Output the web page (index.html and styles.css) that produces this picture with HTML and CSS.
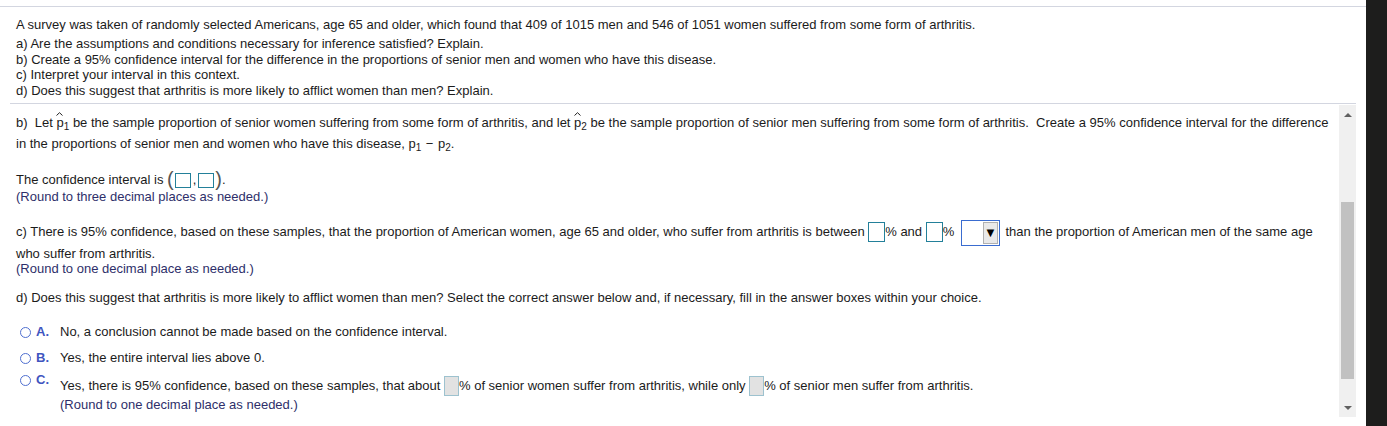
FILE: index.html
```html
<!DOCTYPE html>
<html>
<head>
<meta charset="utf-8">
<link rel="stylesheet" href="styles.css">
</head>
<body>
<div class="screen">
  <div class="main">
    <div class="question">
      <p class="intro">A survey was taken of randomly selected Americans, age 65 and older, which found that 409 of 1015 men and 546 of 1051 women suffered from some form of arthritis.</p>
      <p class="parts">a) Are the assumptions and conditions necessary for inference satisfied? Explain.<br>b) Create a 95% confidence interval for the difference in the proportions of senior men and women who have this disease.<br>c) Interpret your interval in this context.<br>d) Does this suggest that arthritis is more likely to afflict women than men? Explain.</p>
    </div>
    <div class="pane">
      <div class="content">
        <p class="pb">b)&nbsp; Let <span class="ph">p<svg class="hat" width="7" height="4" viewBox="0 0 7 4"><path d="M0.5 3.5 L3.5 0.7 L6.5 3.5" fill="none" stroke="#222" stroke-width="1"/></svg></span><sub>1</sub> be the sample proportion of senior women suffering from some form of arthritis, and let <span class="ph">p<svg class="hat" width="7" height="4" viewBox="0 0 7 4"><path d="M0.5 3.5 L3.5 0.7 L6.5 3.5" fill="none" stroke="#222" stroke-width="1"/></svg></span><sub>2</sub> be the sample proportion of senior men suffering from some form of arthritis.&nbsp; Create a 95% confidence interval for the difference<br>in the proportions of senior men and women who have this disease, <span class="pv">p</span><sub>1</sub> <span class="minus">−</span> <span class="pv">p</span><sub>2</sub>.</p>
        <p class="ci">The confidence interval is <span class="paren">(</span><span class="box ci-box"></span><span class="comma">,</span><span class="box ci-box"></span><span class="paren">)</span>.</p>
        <p class="note">(Round to three decimal places as needed.)</p>
        <p class="pc">c) There is 95% confidence, based on these samples, that the proportion of American women, age 65 and older, who suffer from arthritis is between <span class="box c-box"></span>% and <span class="box c-box"></span>% <span class="select"><span class="sel-btn">▼</span></span> than the proportion of American men of the same age<br>who suffer from arthritis.</p>
        <p class="note note-c">(Round to one decimal place as needed.)</p>
        <p class="pd">d) Does this suggest that arthritis is more likely to afflict women than men? Select the correct answer below and, if necessary, fill in the answer boxes within your choice.</p>
        <div class="choices">
          <div class="choice">
            <span class="radio"></span><span class="letter">A.</span><span class="ctext">No, a conclusion cannot be made based on the confidence interval.</span>
          </div>
          <div class="choice">
            <span class="radio"></span><span class="letter">B.</span><span class="ctext">Yes, the entire interval lies above 0.</span>
          </div>
          <div class="choice choice-c">
            <span class="radio"></span><span class="letter">C.</span>
            <div class="ctext">
              <div class="cline">Yes, there is 95% confidence, based on these samples, that about <span class="box g-box"></span>% of senior women suffer from arthritis, while only <span class="box g-box"></span>% of senior men suffer from arthritis.</div>
              <div class="note">(Round to one decimal place as needed.)</div>
            </div>
          </div>
        </div>
      </div>
      <div class="scrollbar">
        <div class="arrow up"></div>
        <div class="track"><div class="thumb"></div></div>
        <div class="arrow down"></div>
      </div>
    </div>
  </div>
  <div class="dark"></div>
</div>
</body>
</html>
```

FILE: styles.css
```css
html, body {
  margin: 0;
  padding: 0;
  background: #ffffff;
}
body {
  font-family: "Liberation Sans", Arial, sans-serif;
  font-size: 13px;
  color: #1b1b1b;
}
p { margin: 0; }
.screen {
  display: flex;
  width: 1387px;
  height: 426px;
  overflow: hidden;
}
.main {
  width: 1366px;
  height: 426px;
  padding-top: 6px;
  box-sizing: border-box;
  display: flex;
  flex-direction: column;
}
.dark {
  width: 21px;
  height: 426px;
  background: #1d1d1c;
}
.question {
  border-top: 1px solid #d3d6e0;
  padding: 10px 0 0 16px;
  height: 97px;
  box-sizing: border-box;
}
.intro { line-height: 15.5px; }
.parts { line-height: 15.5px; margin-top: 3.5px; }

.pane {
  margin-left: 10px;
  margin-right: 10px;
  border-top: 1px solid #d3d6e0;
  flex: 1;
  display: flex;
  min-height: 0;
}
.content {
  flex: 1;
  padding: 8px 0 0 6px;
}
.pb { line-height: 21px; }
.ph {
  position: relative;
  display: inline-block;
}
.hat {
  position: absolute;
  left: 0px;
  top: 0px;
  display: block;
}
sub {
  font-size: 10px;
  vertical-align: -3px;
  line-height: 0;
}
.minus { margin: 0 1px; }
.ci { line-height: 17px; margin-top: 17px; }
.note { line-height: 17px; color: #2e2f6a; }
.paren {
  font-size: 20px;
  line-height: 0;
  color: #555;
  font-weight: 300;
  vertical-align: -2px;
}
.comma { margin: 0 1px; }
.box {
  display: inline-block;
  box-sizing: border-box;
  vertical-align: middle;
}
.ci-box {
  width: 16px;
  height: 15px;
  border: 1px solid #23809a;
  margin: 0 1px;
}
.pc { line-height: 21px; margin-top: 16px; }
.c-box {
  width: 17px;
  height: 20px;
  border: 1px solid #23809a;
  margin-top: -2px;
}
.select {
  display: inline-block;
  vertical-align: middle;
  box-sizing: border-box;
  width: 39px;
  height: 26px;
  margin: -3px 2px -3px 3px;
  border: 1px solid #3a6cd0;
  background: #fff;
  position: relative;
}
.sel-btn {
  position: absolute;
  right: 1px;
  top: 1px;
  width: 15px;
  height: 22px;
  box-sizing: border-box;
  background: #e9e9e9;
  border: 1px solid #b0b0b0;
  font-size: 13px;
  line-height: 20px;
  text-align: center;
  color: #000;
}
.note-c { margin-top: -3px; line-height: 16px; }
.pd { line-height: 16px; margin-top: 13.5px; }
.choices { margin-top: 18px; }
.choice {
  display: flex;
  align-items: center;
  line-height: 16px;
  margin-bottom: 10px;
}
.radio {
  width: 11px;
  height: 11px;
  box-sizing: border-box;
  border: 1px solid #4f6fd0;
  border-radius: 50%;
  margin-left: 4px;
  flex: none;
}
.letter {
  width: 24px;
  margin-left: 5px;
  color: #3f55c0;
  font-weight: bold;
  flex: none;
}
.choice-c { align-items: flex-start; }
.choice-c .radio { margin-top: -1px; }
.choice-c .letter { margin-top: -4px; }
.cline { line-height: 20px; }
.g-box {
  width: 15px;
  height: 20px;
  background: #e2e2e2;
  border: 1px solid #9dc2cf;
  margin-top: -2px;
}
.choice-c .note { line-height: 16px; margin-top: 1px; }

.scrollbar {
  width: 17px;
  height: 312px;
  margin-top: 1px;
  background: #f0f0f0;
  display: flex;
  flex-direction: column;
  align-items: center;
}
.arrow {
  width: 0;
  height: 0;
  border-left: 4px solid transparent;
  border-right: 4px solid transparent;
  flex: none;
}
.up {
  border-bottom: 4px solid #606060;
  margin-top: 8px;
}
.down {
  border-top: 4px solid #606060;
  margin-bottom: 7px;
}
.track {
  flex: 1;
  width: 13px;
  padding-top: 85px;
  box-sizing: border-box;
}
.thumb {
  width: 13px;
  height: 177px;
  background: #c1c1c1;
}
```
